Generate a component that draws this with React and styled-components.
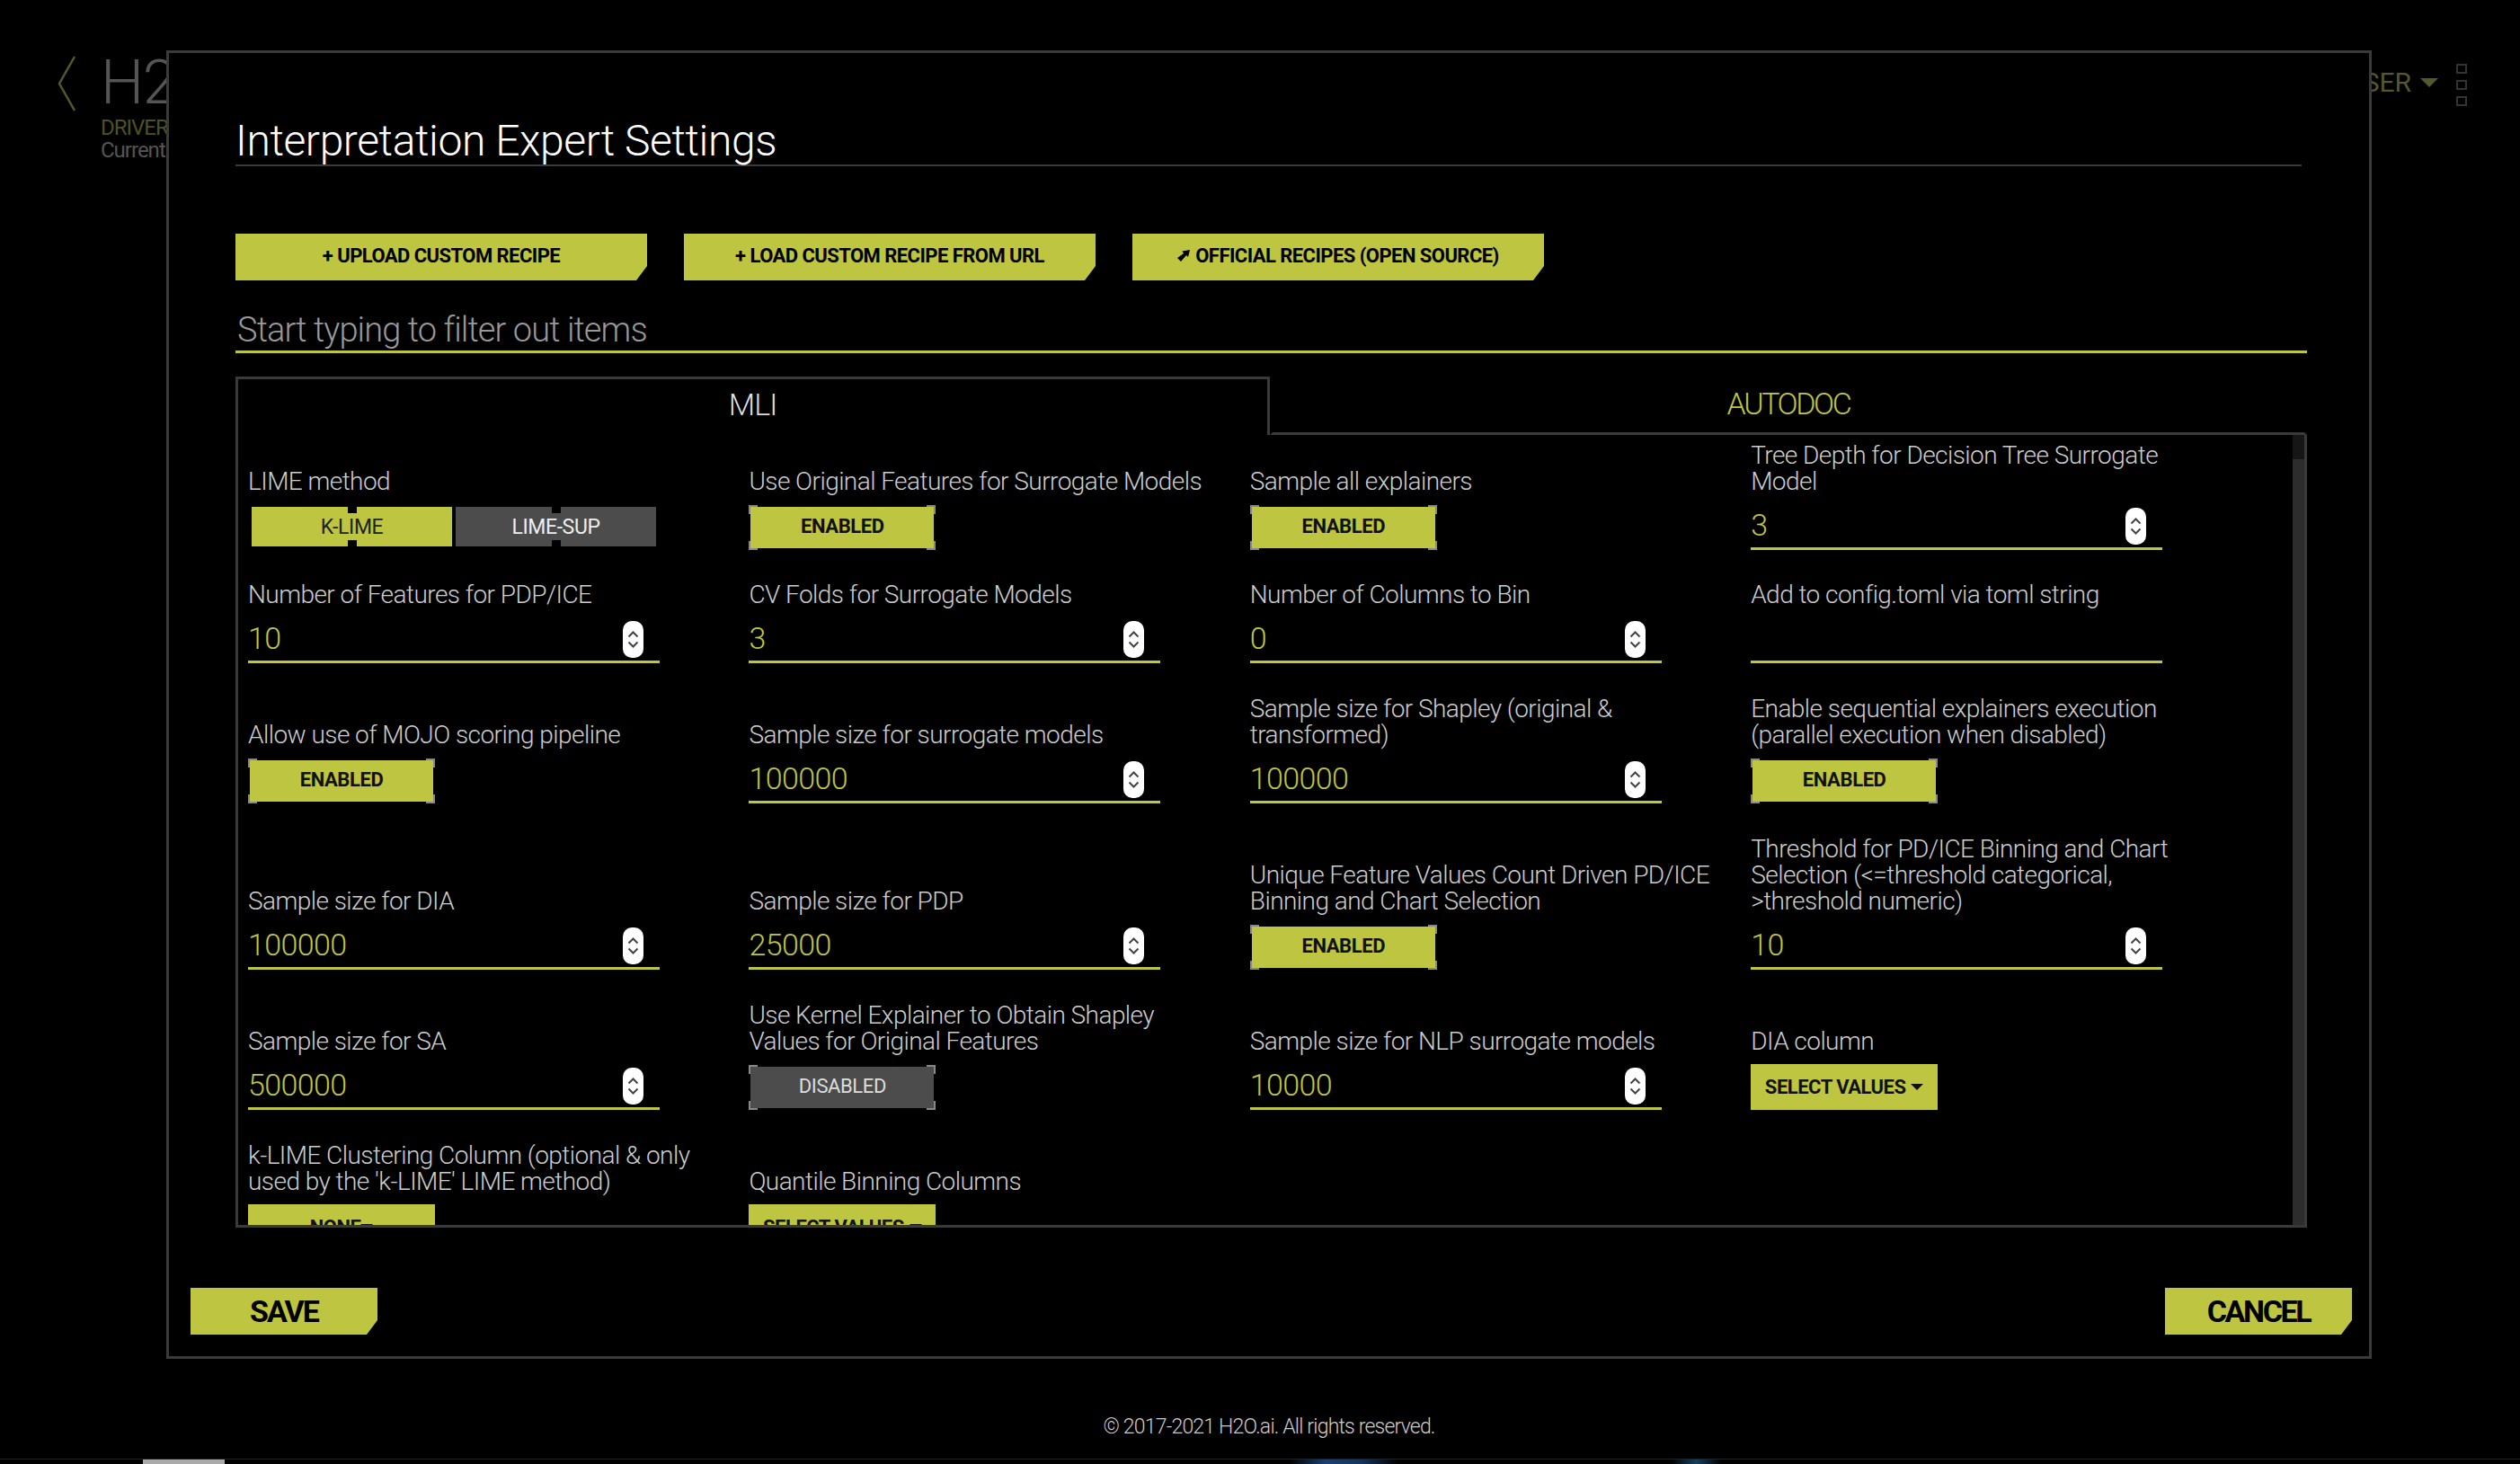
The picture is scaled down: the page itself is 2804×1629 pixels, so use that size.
import React from 'react';
import styled, { createGlobalStyle } from 'styled-components';

const LIME = '#bec540';
const LINE = '#3a3a3a';
const FONT = `Roboto, 'Liberation Sans', sans-serif`;

const Global = createGlobalStyle`
  html, body { margin: 0; padding: 0; background: #000; }
  * { box-sizing: border-box; }
`;

const Page = styled.div`
  position: relative;
  width: 2804px;
  height: 1629px;
  overflow: hidden;
  background: #000;
  font-family: ${FONT};
  display: flex;
  flex-direction: column;
`;

const TopBar = styled.header`
  height: 1300px;
  display: flex;
  justify-content: space-between;
  padding: 62px 59px 0 64px;
`;

const Brand = styled.div`
  display: flex;
  gap: 28px;
  align-items: flex-start;
`;

const BrandText = styled.div`
  display: flex;
  flex-direction: column;
`;

const Logo = styled.div`
  color: #555;
  font-size: 68px;
  font-weight: 300;
  letter-spacing: -1.5px;
  line-height: 60px;
`;

const Product = styled.div`
  color: #4f5220;
  font-size: 24px;
  letter-spacing: -1px;
  line-height: 25px;
  margin-top: 8px;
`;

const Current = styled.div`
  color: #555;
  font-size: 24px;
  letter-spacing: -1px;
  line-height: 25px;
`;

const UserMenu = styled.div`
  display: flex;
  gap: 20px;
  align-items: flex-start;
`;

const UserName = styled.div`
  color: #55582a;
  font-size: 30px;
  line-height: 40px;
  margin-top: 10px;
  display: flex;
  align-items: center;
  gap: 10px;
`;

const Caret = styled.span`
  width: 0;
  height: 0;
  border-left: ${p => p.size}px solid transparent;
  border-right: ${p => p.size}px solid transparent;
  border-top: ${p => p.size}px solid currentColor;
`;

const Dots = styled.div`
  display: flex;
  flex-direction: column;
  gap: 7px;
  margin-top: 9px;
`;

const Dot = styled.span`
  width: 12px;
  height: 11px;
  border: 2px solid #333;
`;

const Modal = styled.section`
  position: absolute;
  left: 185px;
  top: 56px;
  width: 2454px;
  height: 1456px;
  background: #000;
  border: 3px solid ${LINE};
  display: flex;
  flex-direction: column;
`;

const ModalBody = styled.div`
  margin: 0 69px 0 74px;
  display: flex;
  flex-direction: column;
`;

const Title = styled.h1`
  margin: 68px 6px 0 0;
  height: 58px;
  color: #fff;
  font-size: 48px;
  font-weight: 300;
  letter-spacing: -0.4px;
  line-height: 60px;
  border-bottom: 2px solid ${LINE};
`;

const Recipes = styled.div`
  display: flex;
  gap: 41px;
  margin-top: 75px;
`;

const CutButton = styled.button`
  width: ${p => p.width}px;
  height: 52px;
  border: 0;
  padding: 0 0 ${p => p.lift}px;
  background: ${LIME};
  color: #000;
  font-family: ${FONT};
  font-weight: 700;
  font-size: ${p => p.fontSize}px;
  letter-spacing: ${p => p.tracking}px;
  text-transform: uppercase;
  display: flex;
  align-items: center;
  justify-content: center;
  gap: 6px;
  clip-path: polygon(0 0, 100% 0, 100% calc(100% - 16px), calc(100% - 12px) 100%, 0 100%);
`;

const Filter = styled.div`
  margin-top: 33px;
  height: 48px;
  padding-left: 2px;
  color: #999;
  font-size: 38px;
  font-weight: 300;
  letter-spacing: -0.9px;
  line-height: 44px;
  border-bottom: 3px solid ${LIME};
`;

const Tabs = styled.div`
  display: grid;
  grid-template-columns: 1151px 1fr;
  height: 65px;
  margin-top: 26px;
`;

const Tab = styled.div`
  display: flex;
  align-items: center;
  justify-content: center;
  padding-bottom: 6px;
  font-size: 34px;
  font-weight: 300;
  letter-spacing: ${p => (p.active ? '-1px' : '-2.4px')};
  color: ${p => (p.active ? '#ddd' : LIME)};
  border: 3px solid ${p => (p.active ? LINE : 'transparent')};
  border-bottom: ${p => (p.active ? '0' : `3px solid ${LINE}`)};
`;

const Panel = styled.div`
  height: 882px;
  display: flex;
  border: 3px solid ${LINE};
  border-top: 0;
  overflow: hidden;
`;

const Grid = styled.div`
  flex: 1;
  display: grid;
  grid-template-columns: repeat(4, 557.4px);
  grid-template-rows: 155px 126px 156px 185px 156px 156px;
  align-content: start;
  padding: 8px 0 0 11px;
`;

const Field = styled.div`
  display: flex;
  flex-direction: column;
  justify-content: flex-end;
  padding-bottom: 35px;
`;

const Label = styled.div`
  color: #ccc;
  font-size: 28px;
  font-weight: 300;
  letter-spacing: -0.55px;
  line-height: 29px;
  margin-bottom: 6px;
  white-space: pre-line;
`;

const NumberBox = styled.div`
  width: 458px;
  height: 56px;
  display: flex;
  align-items: flex-end;
  justify-content: space-between;
  padding: 0 18px 3px 0;
  border-bottom: 3px solid ${LIME};
`;

const NumberValue = styled.div`
  color: ${LIME};
  font-size: 34px;
  font-weight: 300;
  letter-spacing: -0.6px;
  line-height: 44px;
`;

const Spinner = styled.div`
  width: 23px;
  height: 41px;
  border-radius: 10px;
  background: #fff;
  color: #333;
  display: flex;
  flex-direction: column;
  align-items: center;
  justify-content: center;
  gap: 3px;
`;

const Slot = styled.div`
  height: 56px;
  padding-top: ${p => p.top}px;
`;

const Segments = styled.div`
  display: flex;
  gap: 4px;
  margin-left: 4px;
`;

const Segment = styled.div`
  position: relative;
  width: 223px;
  height: 44px;
  display: flex;
  align-items: center;
  justify-content: center;
  font-size: 23px;
  letter-spacing: -0.4px;
  background: ${p => (p.on ? LIME : '#4c4c4c')};
  color: ${p => (p.on ? '#222' : '#eee')};
  &::before, &::after {
    content: '';
    position: absolute;
    left: calc(50% - 5px);
    width: 10px;
    height: 7px;
    background: #000;
  }
  &::before { top: 0; }
  &::after { bottom: 0; }
`;

const bracket = (w, h) => `
  linear-gradient(#888, #888) left top / ${w}px ${h}px,
  linear-gradient(#888, #888) left top / ${h}px ${w}px,
  linear-gradient(#888, #888) right top / ${w}px ${h}px,
  linear-gradient(#888, #888) right top / ${h}px ${w}px,
  linear-gradient(#888, #888) left bottom / ${w}px ${h}px,
  linear-gradient(#888, #888) left bottom / ${h}px ${w}px,
  linear-gradient(#888, #888) right bottom / ${w}px ${h}px,
  linear-gradient(#888, #888) right bottom / ${h}px ${w}px
`;

const Flag = styled.div`
  width: 208px;
  height: 50px;
  padding: 2px;
  background: ${bracket(10, 2)};
  background-repeat: no-repeat;
`;

const FlagFill = styled.div`
  height: 100%;
  padding-bottom: 3px;
  display: flex;
  align-items: center;
  justify-content: center;
  font-size: 22px;
  letter-spacing: -0.4px;
  font-weight: ${p => (p.on ? 700 : 400)};
  background: ${p => (p.on ? LIME : '#4c4c4c')};
  color: ${p => (p.on ? '#111' : '#ddd')};
`;

const SelectButton = styled.div`
  width: 208px;
  height: 51px;
  background: ${LIME};
  color: #111;
  font-size: 22px;
  font-weight: 700;
  letter-spacing: -0.5px;
  display: flex;
  align-items: center;
  justify-content: center;
  gap: ${p => (p.tight ? 0 : 6)}px;
`;

const Scrollbar = styled.div`
  width: 13px;
  background: linear-gradient(#161616 27px, #2d2d2d 27px);
`;

const Actions = styled.div`
  display: flex;
  justify-content: space-between;
  margin: 67px 19px 0 24px;
`;

const Footer = styled.footer`
  text-align: center;
  padding-left: 20px;
  color: #ccc;
  font-size: 23px;
  font-weight: 300;
  letter-spacing: -0.8px;
  line-height: 30px;
  margin-top: 273px;
`;

const BottomStrip = styled.div`
  position: absolute;
  left: 0;
  right: 0;
  bottom: 0;
  height: 6px;
  border-top: 1px solid #222;
  display: flex;
`;

const Smudge = styled.span`
  height: 5px;
  width: ${p => p.width}px;
  margin-left: ${p => p.left}px;
  background: ${p => p.color};
`;

const Chevron = () => (
  <svg width="20" height="62" viewBox="0 0 20 62" fill="none" style={{ flex: 'none' }}>
    <path d="M19 1 L2 31 L19 61" stroke="#55582a" strokeWidth="2.5" />
  </svg>
);

const Arrows = () => (
  <>
    <svg width="13" height="8" viewBox="0 0 13 8" fill="none"><path d="M1.5 6.5 L6.5 1.5 L11.5 6.5" stroke="#444" strokeWidth="2" /></svg>
    <svg width="13" height="8" viewBox="0 0 13 8" fill="none"><path d="M1.5 1.5 L6.5 6.5 L11.5 1.5" stroke="#444" strokeWidth="2" /></svg>
  </>
);

// little diagonal arrow in front of the official recipes link
const RecipeIcon = () => (
  <svg width="14" height="13" viewBox="0 0 14 13"><path d="M0 9 L7 4 L5.5 1.5 L14 0 L12 8 L10 6 L4 13 Z" fill="#000" /></svg>
);

const fields = [
  { label: 'LIME method', type: 'segments' },
  { label: 'Use Original Features for Surrogate Models', type: 'flag', on: true },
  { label: 'Sample all explainers', type: 'flag', on: true },
  { label: 'Tree Depth for Decision Tree Surrogate\nModel', type: 'number', value: '3' },
  { label: 'Number of Features for PDP/ICE', type: 'number', value: '10' },
  { label: 'CV Folds for Surrogate Models', type: 'number', value: '3' },
  { label: 'Number of Columns to Bin', type: 'number', value: '0' },
  { label: 'Add to config.toml via toml string', type: 'text' },
  { label: 'Allow use of MOJO scoring pipeline', type: 'flag', on: true },
  { label: 'Sample size for surrogate models', type: 'number', value: '100000' },
  { label: 'Sample size for Shapley (original &\ntransformed)', type: 'number', value: '100000' },
  { label: 'Enable sequential explainers execution\n(parallel execution when disabled)', type: 'flag', on: true },
  { label: 'Sample size for DIA', type: 'number', value: '100000' },
  { label: 'Sample size for PDP', type: 'number', value: '25000' },
  { label: 'Unique Feature Values Count Driven PD/ICE\nBinning and Chart Selection', type: 'flag', on: true },
  { label: 'Threshold for PD/ICE Binning and Chart\nSelection (<=threshold categorical,\n>threshold numeric)', type: 'number', value: '10' },
  { label: 'Sample size for SA', type: 'number', value: '500000' },
  { label: 'Use Kernel Explainer to Obtain Shapley\nValues for Original Features', type: 'flag', on: false },
  { label: 'Sample size for NLP surrogate models', type: 'number', value: '10000' },
  { label: 'DIA column', type: 'select', value: 'SELECT VALUES' },
  { label: "k-LIME Clustering Column (optional & only\nused by the 'k-LIME' LIME method)", type: 'select', value: 'NONE', tight: true },
  { label: 'Quantile Binning Columns', type: 'select', value: 'SELECT VALUES' },
];

function Control({ field }) {
  if (field.type === 'number' || field.type === 'text') {
    return (
      <NumberBox>
        <NumberValue>{field.value}</NumberValue>
        {field.type === 'number' && <Spinner><Arrows /></Spinner>}
      </NumberBox>
    );
  }
  if (field.type === 'segments') {
    return (
      <Slot top={8}>
        <Segments>
          <Segment on>K-LIME</Segment>
          <Segment>LIME-SUP</Segment>
        </Segments>
      </Slot>
    );
  }
  if (field.type === 'flag') {
    return (
      <Slot top={6}>
        <Flag>
          <FlagFill on={field.on}>{field.on ? 'ENABLED' : 'DISABLED'}</FlagFill>
        </Flag>
      </Slot>
    );
  }
  return (
    <Slot top={5}>
      <SelectButton tight={field.tight}>{field.value}<Caret size={7} /></SelectButton>
    </Slot>
  );
}

export default function App() {
  return (
    <Page>
      <Global />
      <TopBar>
        <Brand>
          <Chevron />
          <BrandText>
            <Logo>H2O</Logo>
            <Product>DRIVERLESS AI</Product>
            <Current>Current</Current>
          </BrandText>
        </Brand>
        <UserMenu>
          <UserName>USER<Caret size={10} /></UserName>
          <Dots><Dot /><Dot /><Dot /></Dots>
        </UserMenu>
      </TopBar>

      <Modal>
        <ModalBody>
          <Title>Interpretation Expert Settings</Title>
          <Recipes>
            <CutButton width={458} fontSize={22} tracking={-0.55} lift={3}>+ Upload custom recipe</CutButton>
            <CutButton width={458} fontSize={22} tracking={-0.55} lift={3}>+ Load custom recipe from URL</CutButton>
            <CutButton width={458} fontSize={22} tracking={-0.55} lift={3}><RecipeIcon />Official recipes (open source)</CutButton>
          </Recipes>
          <Filter>Start typing to filter out items</Filter>
          <Tabs>
            <Tab active>MLI</Tab>
            <Tab>AUTODOC</Tab>
          </Tabs>
          <Panel>
            <Grid>
              {fields.map(f => (
                <Field key={f.label}>
                  <Label>{f.label}</Label>
                  <Control field={f} />
                </Field>
              ))}
            </Grid>
            <Scrollbar />
          </Panel>
        </ModalBody>
        <Actions>
          <CutButton width={208} fontSize={34} tracking={-2} lift={0}>Save</CutButton>
          <CutButton width={208} fontSize={34} tracking={-2.4} lift={0}>Cancel</CutButton>
        </Actions>
      </Modal>

      <Footer>© 2017-2021 H2O.ai. All rights reserved.</Footer>
      <BottomStrip>
        <Smudge width={91} left={159} color="#aaa" />
        <Smudge width={120} left={1185} color="linear-gradient(90deg, transparent, #1c3f70, #16335c, transparent)" />
        <Smudge width={55} left={305} color="linear-gradient(90deg, transparent, #16405c, transparent)" />
      </BottomStrip>
    </Page>
  );
}
